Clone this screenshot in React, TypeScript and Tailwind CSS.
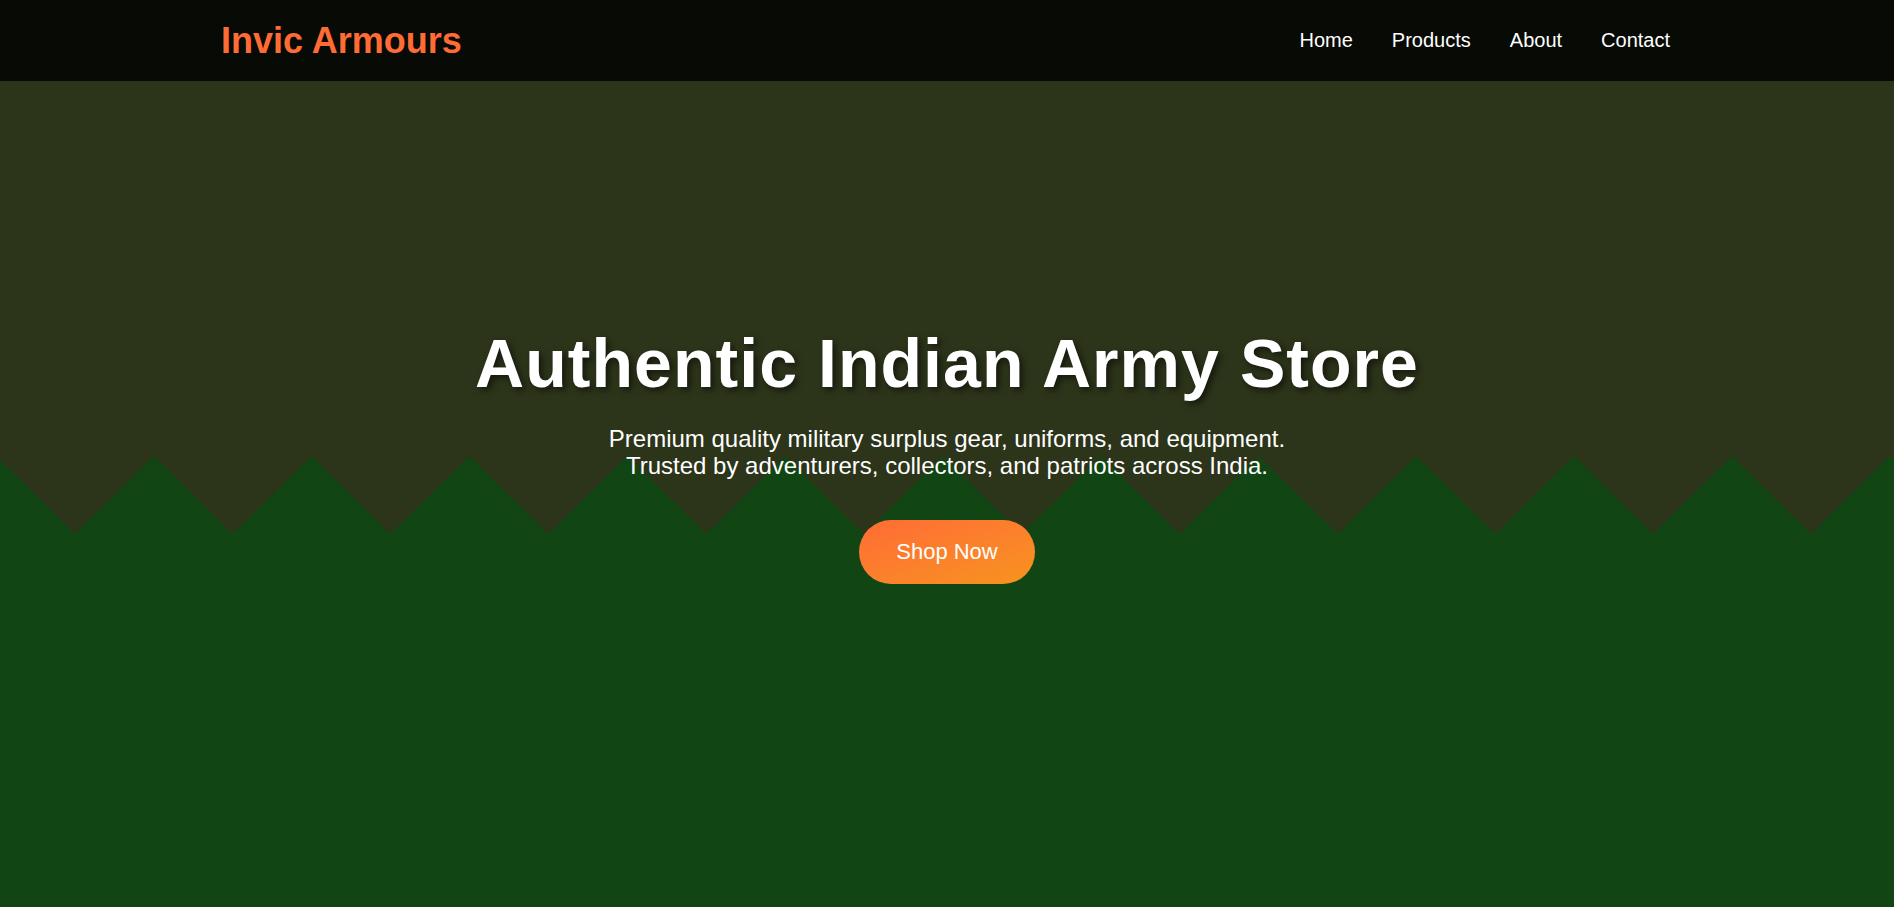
import React from "react";

function zigzagPoints(): string {
  const period = 157.83;
  const half = period / 2;
  const h = 78;
  const pts: string[] = [];
  let x = -4;
  pts.push(`${x},0`);
  while (x < 1900) {
    pts.push(`${(x + half).toFixed(2)},${h}`);
    pts.push(`${(x + period).toFixed(2)},0`);
    x += period;
  }
  pts.push(`${(x + 10).toFixed(2)},${h + 4}`);
  pts.push(`-10,${h + 4}`);
  return pts.join(" ");
}

export default function App() {
  const points = zigzagPoints();
  return (
    <div
      className="flex min-h-[907px] flex-col bg-[#2c341a] text-white"
      style={{ fontFamily: '"Liberation Sans", Arial, Helvetica, sans-serif' }}
    >
      <header className="flex h-[81px] shrink-0 items-center justify-between bg-[#080a05] pl-[221px] pr-[224px]">
        <div className="text-[36px] font-bold leading-[1.15] text-[#ff6b35]">Invic Armours</div>
        <nav className="flex items-center gap-[39px] text-[20px] leading-[1.15] text-white">
          <a href="#" className="block">Home</a>
          <a href="#" className="block">Products</a>
          <a href="#" className="block">About</a>
          <a href="#" className="block">Contact</a>
        </nav>
      </header>

      <section className="relative flex flex-1 flex-col items-center justify-center overflow-hidden pb-[81px]">
        <div className="absolute inset-0 flex flex-col" aria-hidden="true">
          <div className="h-[375px] shrink-0 bg-[#2c341a]" />
          <svg
            className="block h-[78px] w-full shrink-0"
            viewBox="0 0 1894 78"
            preserveAspectRatio="none"
          >
            <rect x="0" y="0" width="1894" height="78" fill="#2c341a" />
            <polygon points={points} fill="#114614" />
          </svg>
          <div className="-mt-px flex-1 bg-[#114614]" />
        </div>

        <div className="relative z-10 flex flex-col items-center text-center">
          <h1 className="text-[68px] font-bold leading-[81.6px] tracking-[1.05px] text-white [text-shadow:3px_3px_6px_rgba(0,0,0,0.55)]">
            Authentic Indian Army Store
          </h1>
          <p className="mt-5 text-[24px] leading-[27.6px] text-white">
            Premium quality military surplus gear, uniforms, and equipment.
            <br />
            Trusted by adventurers, collectors, and patriots across India.
          </p>
          <button className="mt-10 flex h-[64px] items-center rounded-full bg-gradient-to-br from-[#ff6b35] to-[#f7931e] px-[37px] text-[22px] leading-[1.15] text-white">
            Shop Now
          </button>
        </div>
      </section>
    </div>
  );
}
